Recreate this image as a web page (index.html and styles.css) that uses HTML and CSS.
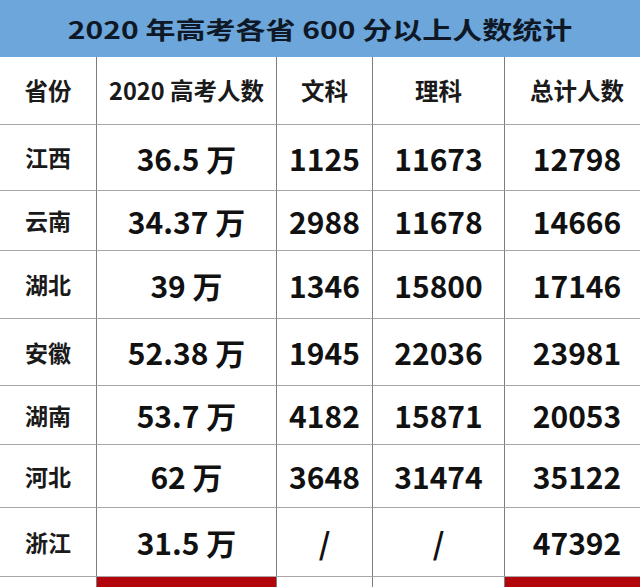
FILE: index.html
```html
<!DOCTYPE html>
<html lang="zh">
<head>
<meta charset="utf-8">
<title>2020 年高考各省 600 分以上人数统计</title>
<link rel="stylesheet" href="styles.css">
</head>
<body>
<div class="sheet">
  <div class="title"><span class="squash">2020 年高考各省 600 分以上人数统计</span></div>
  <div class="grid">
    <div class="cell head">省份</div>
    <div class="cell head">2020 高考人数</div>
    <div class="cell head">文科</div>
    <div class="cell head">理科</div>
    <div class="cell head">总计人数</div>

    <div class="cell prov">江西</div>
    <div class="cell num">36.5 万</div>
    <div class="cell num">1125</div>
    <div class="cell num">11673</div>
    <div class="cell num">12798</div>

    <div class="cell prov">云南</div>
    <div class="cell num">34.37 万</div>
    <div class="cell num">2988</div>
    <div class="cell num">11678</div>
    <div class="cell num">14666</div>

    <div class="cell prov">湖北</div>
    <div class="cell num">39 万</div>
    <div class="cell num">1346</div>
    <div class="cell num">15800</div>
    <div class="cell num">17146</div>

    <div class="cell prov">安徽</div>
    <div class="cell num">52.38 万</div>
    <div class="cell num">1945</div>
    <div class="cell num">22036</div>
    <div class="cell num">23981</div>

    <div class="cell prov">湖南</div>
    <div class="cell num">53.7 万</div>
    <div class="cell num">4182</div>
    <div class="cell num">15871</div>
    <div class="cell num">20053</div>

    <div class="cell prov">河北</div>
    <div class="cell num">62 万</div>
    <div class="cell num">3648</div>
    <div class="cell num">31474</div>
    <div class="cell num">35122</div>

    <div class="cell prov">浙江</div>
    <div class="cell num">31.5 万</div>
    <div class="cell num">/</div>
    <div class="cell num">/</div>
    <div class="cell num">47392</div>

    <div class="cell foot"></div>
    <div class="cell foot red"></div>
    <div class="cell foot"></div>
    <div class="cell foot"></div>
    <div class="cell foot red"></div>
  </div>
</div>
</body>
</html>
```

FILE: styles.css
```css
html, body {
  margin: 0;
  padding: 0;
  background: #ffffff;
  overflow: hidden;
}

body {
  width: 640px;
  height: 587px;
  font-family: "Noto Sans CJK SC", "Noto Sans", sans-serif;
  font-weight: 700;
  color: #141414;
}

.sheet {
  width: 650px;
}

.title {
  width: 640px;
  height: 57px;
  background: #6ca6da;
  display: flex;
  align-items: center;
  justify-content: center;
  color: #0f1826;
  font-size: 30px;
  line-height: 1;
}

.squash {
  display: inline-block;
  transform: scaleY(0.8);
  white-space: pre;
}

.grid {
  display: grid;
  grid-template-columns: 97px 180px 96px 132px 145px;
  grid-template-rows: 68px 66px 60px 68px 67px 59px 63px 69px 20px;
}

.cell {
  box-sizing: border-box;
  border-right: 1px solid #7d7d7d;
  border-bottom: 1px solid #a8a8a8;
  display: flex;
  align-items: center;
  justify-content: center;
  white-space: pre;
  line-height: 1;
}

.head {
  font-size: 23.5px;
  color: #1a1a1a;
}

.prov {
  font-size: 23px;
  color: #1a1a1a;
}

.num {
  font-size: 30px;
  color: #111111;
}

.foot {
  border-bottom: none;
}

.red {
  background: #b3060c;
}
```
